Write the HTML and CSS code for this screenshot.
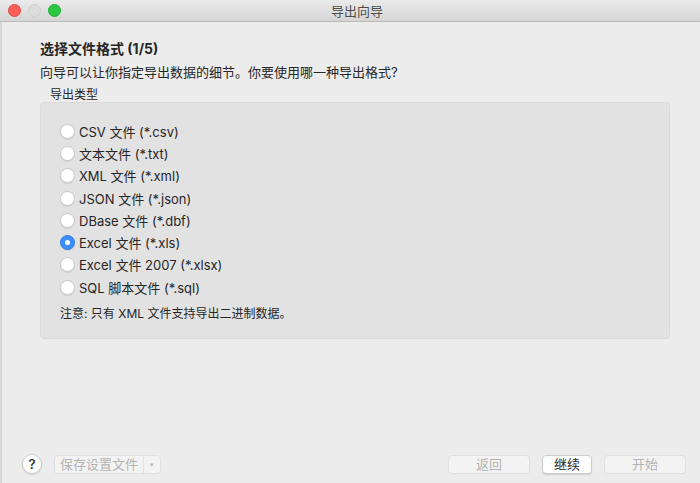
FILE: index.html
```html
<!DOCTYPE html>
<html lang="zh-CN">
<head>
  <meta charset="UTF-8" />
  <title>导出向导</title>
  <link rel="stylesheet" href="styles.css">
</head>
<body>
  <div class="window">
    <!-- 标题栏 -->
    <header class="titlebar">
      <div class="lights">
        <span class="light red"></span>
        <span class="light idle"></span>
        <span class="light green"></span>
      </div>
      <div class="title">导出向导</div>
    </header>

    <main class="content">
      <h1 class="heading">选择文件格式 (1/5)</h1>
      <p class="intro">向导可以让你指定导出数据的细节。你要使用哪一种导出格式?</p>

      <div class="group-label">导出类型</div>
      <section class="group">
        <ul class="options">
          <li><span class="radio"></span>CSV 文件 (*.csv)</li>
          <li><span class="radio"></span>文本文件 (*.txt)</li>
          <li><span class="radio"></span>XML 文件 (*.xml)</li>
          <li><span class="radio"></span>JSON 文件 (*.json)</li>
          <li><span class="radio"></span>DBase 文件 (*.dbf)</li>
          <li><span class="radio checked"></span>Excel 文件 (*.xls)</li>
          <li><span class="radio"></span>Excel 文件 2007 (*.xlsx)</li>
          <li><span class="radio"></span>SQL 脚本文件 (*.sql)</li>
        </ul>
        <p class="note">注意: 只有 XML 文件支持导出二进制数据。</p>
      </section>
    </main>

    <!-- 底部按钮 -->
    <footer class="footer">
      <button class="help">?</button>
      <div class="split-btn">
        <span class="split-main">保存设置文件</span>
        <span class="split-arrow">▾</span>
      </div>
      <div class="spacer"></div>
      <button class="btn btn-wide" disabled>返回</button>
      <button class="btn btn-primary">继续</button>
      <button class="btn btn-wide" disabled>开始</button>
    </footer>
  </div>
</body>
</html>
```

FILE: styles.css
```css
* {
  box-sizing: border-box;
}
html, body {
  margin: 0;
  padding: 0;
  height: 100%;
}
body {
  font-family: Inter, "Noto Sans CJK SC", sans-serif;
  color: #262626;
  background: #ececec;
  overflow: hidden;
}

.window {
  height: 483px;
  display: flex;
  flex-direction: column;
  border-left: 2px solid #d6d6d6;
  background: #ececec;
}

/* 标题栏 */
.titlebar {
  height: 22px;
  flex: none;
  display: flex;
  align-items: center;
  position: relative;
  background: linear-gradient(#ebebeb, #d5d5d5);
  border-bottom: 1px solid #b9b9b9;
  margin-left: -2px;
}
.lights {
  display: flex;
  gap: 7px;
  padding-left: 8px;
}
.light {
  width: 13px;
  height: 13px;
  border-radius: 50%;
}
.light.red {
  background: #fc5f57;
  border: 1px solid #e0443e;
}
.light.idle {
  background: #dcdcdc;
  border: 1px solid #cfcfcf;
}
.light.green {
  background: #2ac940;
  border: 1px solid #1fa932;
}
.title {
  position: absolute;
  left: 0;
  right: 0;
  text-align: center;
  padding-left: 14px;
  font-size: 13px;
  color: #4d4d4d;
}

/* 内容 */
.content {
  flex: 1;
  padding: 17px 30px 0 38px;
}
.heading {
  margin: 0;
  font-size: 14px;
  font-weight: 700;
  line-height: 20px;
}
.intro {
  margin: 4px 0 0;
  font-size: 13px;
  line-height: 18px;
}
.group-label {
  margin: 8px 0 0 10px;
  font-size: 12px;
  line-height: 12px;
}
.group {
  margin-top: 1px;
  background: #e2e2e2;
  border: 1px solid #dadada;
  border-radius: 4px;
  height: 237px;
  padding: 17px 0 0 19px;
}
.options {
  list-style: none;
  margin: 0;
  padding: 0;
}
.options li {
  display: flex;
  align-items: center;
  gap: 4px;
  height: 22.3px;
  font-size: 13px;
  color: #262626;
}
.radio {
  width: 15px;
  height: 15px;
  border-radius: 50%;
  background: #fff;
  border: 1px solid #c8c8c8;
  box-shadow: 0 1px 1px rgba(0, 0, 0, 0.08);
  flex: none;
  display: flex;
  align-items: center;
  justify-content: center;
}
.radio.checked {
  background: #3d8ef8;
  border-color: #2f7de3;
}
.radio.checked::after {
  content: "";
  width: 5px;
  height: 5px;
  border-radius: 50%;
  background: #fff;
}
.note {
  margin: 7px 0 0;
  font-size: 12px;
  line-height: 18px;
}

/* 底部 */
.footer {
  flex: none;
  height: 40px;
  display: flex;
  align-items: center;
  padding: 7px 14px 5px 20px;
  gap: 12px;
}
.help {
  width: 20px;
  height: 20px;
  border-radius: 50%;
  border: 1px solid #d0d0d0;
  background: #fff;
  font-family: inherit;
  font-size: 13px;
  font-weight: 600;
  color: #333;
  padding: 0;
  box-shadow: 0 1px 1px rgba(0, 0, 0, 0.12);
}
.split-btn {
  display: flex;
  align-items: stretch;
  height: 19px;
  border: 1px solid #e0e0e0;
  border-radius: 4px;
  background: #f3f3f3;
  color: #b3b3b3;
  font-size: 13px;
}
.split-main {
  width: 89px;
  padding-left: 5px;
  line-height: 17px;
  border-right: 1px solid #e2e2e2;
}
.split-arrow {
  width: 16px;
  text-align: center;
  font-size: 7px;
  line-height: 17px;
}
.spacer {
  flex: 1;
}
.btn {
  height: 19px;
  border-radius: 4px;
  border: 1px solid #e0e0e0;
  background: #f3f3f3;
  color: #b3b3b3;
  font-family: inherit;
  font-size: 13px;
  padding: 0;
  line-height: 17px;
}
.btn-wide {
  width: 82px;
}
.btn-primary {
  width: 50px;
  background: #fff;
  color: #262626;
  border-color: #cdcdcd;
  box-shadow: 0 1px 1px rgba(0, 0, 0, 0.12);
}
```
